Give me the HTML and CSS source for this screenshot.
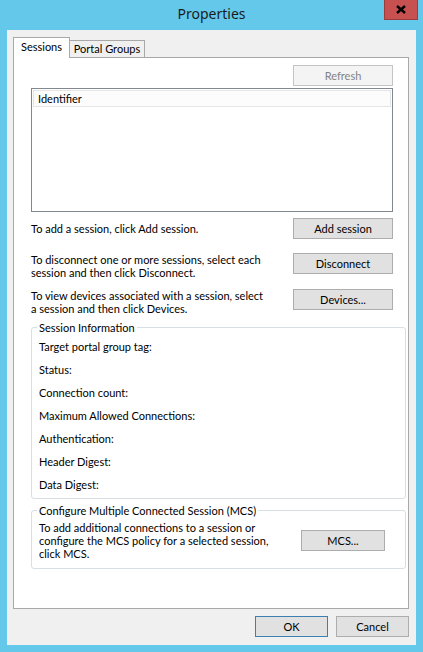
FILE: index.html
```html
<!DOCTYPE html>
<html lang="en">
<head>
<meta charset="utf-8">
<title>Properties</title>
<link rel="stylesheet" href="styles.css">
</head>
<body>
<div class="window">
  <div class="titlebar">
    <div></div>
    <div class="title">Properties</div>
    <div class="close">
      <svg width="10" height="9" viewBox="0 0 10 9"><path d="M1 1 L9 8 M9 1 L1 8" stroke="#000" stroke-width="2.4" fill="none"/></svg>
    </div>
  </div>
  <div class="client">
    <div class="tabs">
      <div class="tab active">Sessions</div>
      <div class="tab">Portal Groups</div>
    </div>
    <div class="panel">
      <div class="top">
        <div class="refresh-row"><button class="btn disabled refresh">Refresh</button></div>
        <div class="list"><div class="list-header">Identifier</div></div>
        <div class="action add">
          <span class="desc">To add a session, click Add session.</span>
          <button class="btn wide">Add session</button>
        </div>
        <div class="action multi disc">
          <span class="desc">To disconnect one or more sessions, select each<br>session and then click Disconnect.</span>
          <button class="btn wide">Disconnect</button>
        </div>
        <div class="action multi dev">
          <span class="desc">To view devices associated with a session, select<br>a session and then click Devices.</span>
          <button class="btn wide">Devices...</button>
        </div>
      </div>
      <fieldset class="group info">
        <legend>Session Information</legend>
        <div class="info-row">Target portal group tag:</div>
        <div class="info-row">Status:</div>
        <div class="info-row">Connection count:</div>
        <div class="info-row">Maximum Allowed Connections:</div>
        <div class="info-row">Authentication:</div>
        <div class="info-row">Header Digest:</div>
        <div class="info-row">Data Digest:</div>
      </fieldset>
      <fieldset class="group mcs">
        <legend>Configure Multiple Connected Session (MCS)</legend>
        <div class="mcs-body">
          <span class="desc">To add additional connections to a session or<br>configure the MCS policy for a selected session,<br>click MCS.</span>
          <button class="btn mcs-btn">MCS...</button>
        </div>
      </fieldset>
    </div>
    <div class="footer">
      <button class="btn dlg default">OK</button>
      <button class="btn dlg">Cancel</button>
    </div>
  </div>
</div>
</body>
</html>
```

FILE: styles.css
```css
* { box-sizing: border-box; }
html, body { margin: 0; padding: 0; }
body {
  background: #63c8ea;
  width: 423px;
  height: 652px;
  overflow: hidden;
  font-family: "Segoe UI", Lato, "Noto Sans", sans-serif;
  font-size: 11px;
  color: #000;
}
.window { width: 423px; height: 652px; }
.titlebar {
  height: 30px;
  display: grid;
  grid-template-columns: 1fr auto 1fr;
  align-items: start;
}
.title {
  font-family: "Segoe UI", "Noto Sans", sans-serif;
  font-size: 14px;
  line-height: 28px;
  color: #1b1b1b;
}
.close {
  justify-self: end;
  margin-right: 5px;
  width: 34px;
  height: 20px;
  background: #c75050;
  border: 1px solid #9b3d3d;
  border-top: 0;
  display: flex;
  align-items: center;
  justify-content: center;
}
.client {
  margin: 0 7px;
  height: 615px;
  background: #f0f0f0;
  padding: 7px 7px 0 6px;
}
.tabs {
  display: flex;
  align-items: flex-end;
  height: 20px;
}
.tab {
  position: relative;
  border: 1px solid #a8a8a8;
  border-bottom: 0;
  background: #f0f0f0;
  height: 17px;
  width: 76px;
  margin-left: -1px;
  line-height: 16px;
  text-align: center;
}
.tab.active {
  z-index: 1;
  margin-left: 0;
  width: 57px;
  height: 21px;
  margin-bottom: -1px;
  background: #fff;
  line-height: 18px;
}
.panel {
  height: 552px;
  background: #fff;
  border: 1px solid #a8a8a8;
  padding: 7px 2px 0 17px;
}
.top { margin-right: 13px; }
.refresh-row { display: flex; justify-content: flex-end; }
.btn {
  font: inherit;
  color: #000;
  background: #e1e1e1;
  border: 1px solid #adadad;
  padding: 0;
  height: 21px;
  line-height: 18px;
  text-align: center;
}
.btn.disabled {
  background: #f4f4f4;
  border-color: #c4c4c4;
  color: #838383;
}
.refresh, .wide { width: 100px; }
.list {
  margin-top: 2px;
  height: 124px;
  border: 1px solid #828790;
  padding: 1px;
}
.list-header {
  height: 17px;
  background: #fcfcfc;
  border: 1px solid #e5e5e5;
  line-height: 15px;
  padding-left: 4px;
}
.action {
  display: flex;
  justify-content: space-between;
  align-items: center;
}
.action.multi { align-items: flex-start; }
.desc { line-height: 13px; }
.add { margin-top: 6px; }
.disc { margin-top: 14px; }
.dev { margin-top: 10px; }
.group {
  margin: 0;
  border: 1px solid #d5dfe5;
  border-radius: 3px;
  padding: 0 0 0 7px;
  min-width: 0;
}
.group legend {
  padding: 0 2px;
  margin-left: -2px;
  line-height: 13px;
}
.info { margin-top: 6px; padding-top: 1px; padding-bottom: 2px; }
.info-row { height: 23px; line-height: 23px; }
.mcs { margin-top: 5px; padding-top: 4px; padding-bottom: 8px; padding-right: 20px; }
.mcs-body {
  display: flex;
  justify-content: space-between;
  align-items: center;
}
.mcs-btn { width: 84px; }
.footer {
  display: flex;
  justify-content: flex-end;
  gap: 8px;
  margin-top: 7px;
}
.dlg { width: 73px; }
.dlg.default { border-color: #3c7fb1; }
```
